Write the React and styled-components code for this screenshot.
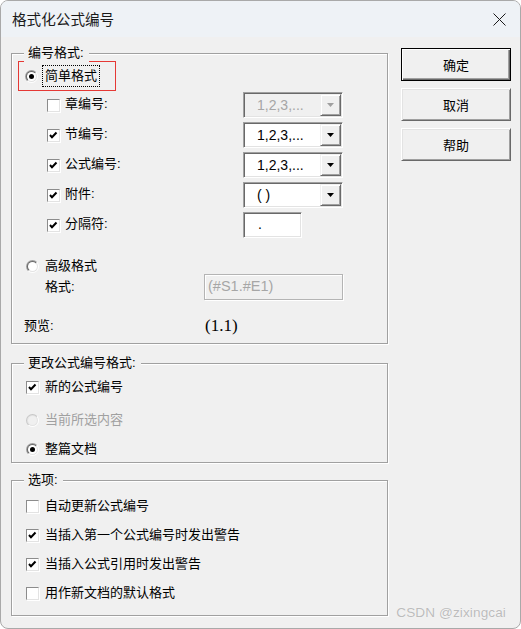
import React from "react";
import styled, { createGlobalStyle } from "styled-components";

const GlobalStyle = createGlobalStyle`
  html, body { margin: 0; padding: 0; background: #ffffff; }
  body { font-family: "Liberation Sans", "Noto Sans CJK SC", sans-serif; }
  * { box-sizing: border-box; }
`;

const FONT = `"Liberation Sans", "Noto Sans CJK SC", sans-serif`;

const Window = styled.div`
  position: relative;
  width: 521px;
  height: 629px;
  border: 1px solid #a9a9a9;
  border-radius: 8px;
  background: #f0f0f0;
  overflow: hidden;
  display: flex;
  flex-direction: column;
  font-family: ${FONT};
  font-size: 13px;
  color: #000;
`;

const TitleBar = styled.div`
  height: 36px;
  flex: none;
  display: flex;
  align-items: center;
  justify-content: space-between;
  padding: 0 9px 0 11px;
  background: #eef2f6;
`;

const Title = styled.div`
  font-size: 14.6px;
  line-height: 20px;
  color: #1a1a1a;
  margin-top: 1px;
`;

const CloseBox = styled.div`
  width: 24px;
  height: 24px;
  display: flex;
  align-items: center;
  justify-content: center;
`;

const Body = styled.div`
  flex: 1;
  display: flex;
  align-items: flex-start;
  gap: 13px;
  padding-left: 10px;
`;

const LeftColumn = styled.div`
  width: 377px;
  flex: none;
  display: flex;
  flex-direction: column;
  padding-top: 16px;
`;

const Group = styled.div`
  position: relative;
  height: ${(p) => p.$h}px;
  margin-top: ${(p) => p.$mt || 0}px;
  border: 1px solid #a0a0a0;
  box-shadow: 1px 1px 0 #ffffff, inset 1px 1px 0 #ffffff;
  display: flex;
  flex-direction: column;
`;

const Legend = styled.span`
  position: absolute;
  top: -10px;
  left: 12px;
  padding: 0 5px 0 4px;
  background: #f0f0f0;
  line-height: 18px;
  font-size: 13px;
`;

const Highlight = styled.div`
  width: 98px;
  height: 30px;
  margin: 7px 0 0 6px;
  border: 1px solid #e53935;
  display: flex;
  align-items: center;
  padding-left: 6px;
`;

const FocusLabel = styled.span`
  margin-left: 4px;
  border: 1px dotted #000;
  padding: 0 2px;
  line-height: 20px;
  white-space: nowrap;
`;

const OptionRow = styled.div`
  display: flex;
  align-items: center;
  gap: 6px;
  height: ${(p) => p.$h || 20}px;
  margin-top: ${(p) => p.$mt || 0}px;
  padding-left: ${(p) => p.$pl || 14}px;
  color: ${(p) => (p.$disabled ? "#a0a0a0" : "#000")};
  white-space: nowrap;
  line-height: 18px;
`;

const CheckGrid = styled.div`
  display: grid;
  grid-template-columns: 18px 178px auto;
  grid-auto-rows: 26px;
  row-gap: 4px;
  align-items: center;
  margin-top: 1px;
  padding-left: 35px;
`;

const GridLabel = styled.span`
  white-space: nowrap;
  line-height: 18px;
  margin-top: -2px;
`;

const CheckBox = styled.span`
  width: 13px;
  height: 13px;
  flex: none;
  display: inline-flex;
  border: 1px solid;
  border-color: #8c8c8c #e3e3e3 #e3e3e3 #8c8c8c;
  box-shadow: 1px 1px 0 #ffffff;
  background: #ffffff;
`;

const SelectBox = styled.div`
  width: 100px;
  height: 26px;
  display: flex;
  border-style: solid;
  border-width: 1px;
  border-color: #a0a0a0 #ffffff #ffffff #a0a0a0;
  box-shadow: inset 1px 1px 0 #696969, inset -1px -1px 0 #e3e3e3;
  padding: 1px;
  background: ${(p) => (p.$disabled ? "#f0f0f0" : "#ffffff")};
  background-clip: content-box;
`;

const SelectText = styled.span`
  flex: 1;
  padding-left: 12px;
  font-size: 14px;
  line-height: 22px;
  color: ${(p) => (p.$disabled ? "#a6a6a6" : "#000")};
  white-space: nowrap;
`;

const DropButton = styled.span`
  width: 21px;
  flex: none;
  display: flex;
  align-items: center;
  justify-content: center;
  background: #f0f0f0;
  border-style: solid;
  border-width: 1px;
  border-color: #f0f0f0 #696969 #696969 #f0f0f0;
  box-shadow: inset 1px 1px 0 #ffffff, inset -1px -1px 0 #a0a0a0;
`;

const TextBox = styled.div`
  width: ${(p) => p.$w}px;
  height: 26px;
  border-style: solid;
  border-width: 1px;
  border-color: #a0a0a0 #ffffff #ffffff #a0a0a0;
  box-shadow: inset 1px 1px 0 #696969, inset -1px -1px 0 #e3e3e3;
  background: #ffffff;
  padding-left: 14px;
  font-size: 14px;
  line-height: 22px;
`;

const FieldRow = styled.div`
  display: flex;
  align-items: center;
  height: ${(p) => p.$h}px;
  margin-top: ${(p) => p.$mt || 0}px;
  padding-left: ${(p) => p.$pl}px;
  white-space: nowrap;
`;

const FieldLabel = styled.span`
  width: ${(p) => p.$w}px;
  flex: none;
  line-height: 18px;
`;

const FlatBox = styled.div`
  width: ${(p) => p.$w}px;
  flex: none;
  height: 26px;
  border: 1px solid #b4b4b4;
  box-shadow: 1px 1px 0 #ffffff, inset 1px 1px 0 #ffffff;
  background: #f0f0f0;
  padding-left: 3px;
  font-size: 14.5px;
  line-height: 23px;
  color: #a6a6a6;
  white-space: nowrap;
`;

const PreviewValue = styled.span`
  font-family: "Liberation Serif", serif;
  font-size: 17px;
  line-height: 20px;
`;

const ButtonColumn = styled.div`
  display: flex;
  flex-direction: column;
  gap: 7px;
  padding-top: 11px;
`;

const DialogButton = styled.button`
  width: 110px;
  height: 33px;
  padding: 0;
  font-family: ${FONT};
  font-size: 13px;
  color: #000;
  background: #f0f0f0;
  border-style: solid;
  border-width: 1px;
  border-color: ${(p) => (p.$default ? "#000 #000 #000 #000" : "#ffffff #696969 #696969 #ffffff")};
  box-shadow: ${(p) =>
    p.$default
      ? "inset 1px 1px 0 #ffffff, inset -1px -1px 0 #696969, inset -2px -2px 0 #a0a0a0"
      : "inset 1px 1px 0 #e3e3e3, inset -1px -1px 0 #a0a0a0"};
`;

const Watermark = styled.div`
  position: absolute;
  right: 14px;
  bottom: 8px;
  font-family: "Liberation Sans", sans-serif;
  font-size: 13.6px;
  color: #bcbcbc;
  text-shadow: 0 0 1px #ffffff;
  letter-spacing: 0.1px;
`;

function Radio({ checked, disabled }) {
  const id = React.useId().replace(/:/g, "");
  return (
    <svg width="13" height="13" viewBox="0 0 13 13" style={{ flex: "none" }}>
      <defs>
        <linearGradient id={`o${id}`} x1="0" y1="0" x2="1" y2="1">
          <stop offset="0.5" stopColor={disabled ? "#c8c8c8" : "#a0a0a0"} />
          <stop offset="0.5" stopColor="#ffffff" />
        </linearGradient>
        <linearGradient id={`i${id}`} x1="0" y1="0" x2="1" y2="1">
          <stop offset="0.5" stopColor={disabled ? "#e3e3e3" : "#696969"} />
          <stop offset="0.5" stopColor="#e3e3e3" />
        </linearGradient>
      </defs>
      <circle cx="6.5" cy="6.5" r="6.5" fill={`url(#o${id})`} />
      <circle cx="6.5" cy="6.5" r="5.5" fill={`url(#i${id})`} />
      <circle cx="6.5" cy="6.5" r="4.5" fill={disabled ? "#f0f0f0" : "#ffffff"} />
      {checked && <circle cx="6.5" cy="6.5" r="2.5" fill="#000" />}
    </svg>
  );
}

function Check({ checked }) {
  return (
    <CheckBox>
      {checked && (
        <svg width="11" height="11" viewBox="0 0 11 11">
          <polyline points="2,5 4,7.3 8.5,2.5" fill="none" stroke="#000" strokeWidth="2" />
        </svg>
      )}
    </CheckBox>
  );
}

function Select({ value, disabled }) {
  return (
    <SelectBox $disabled={disabled}>
      <SelectText $disabled={disabled}>{value}</SelectText>
      <DropButton>
        <svg width="7" height="4" viewBox="0 0 7 4">
          <polygon points="0,0 7,0 3.5,4" fill={disabled ? "#a0a0a0" : "#000"} />
        </svg>
      </DropButton>
    </SelectBox>
  );
}

const numberRows = [
  { label: "章编号:", checked: false, value: "1,2,3,...", disabled: true },
  { label: "节编号:", checked: true, value: "1,2,3,..." },
  { label: "公式编号:", checked: true, value: "1,2,3,..." },
  { label: "附件:", checked: true, value: "( )" },
];

const optionRows = [
  { label: "自动更新公式编号", checked: false },
  { label: "当插入第一个公式编号时发出警告", checked: true },
  { label: "当插入公式引用时发出警告", checked: true },
  { label: "用作新文档的默认格式", checked: false },
];

export default function App() {
  return (
    <>
      <GlobalStyle />
      <Window>
        <TitleBar>
          <Title>格式化公式编号</Title>
          <CloseBox>
            <svg width="13" height="13" viewBox="0 0 13 13">
              <path d="M0.5 0.5 L12.5 12.5 M12.5 0.5 L0.5 12.5" stroke="#1a1a1a" strokeWidth="1" />
            </svg>
          </CloseBox>
        </TitleBar>
        <Body>
          <LeftColumn>
            <Group $h={291}>
              <Legend>编号格式:</Legend>
              <Highlight>
                <Radio checked />
                <FocusLabel>简单格式</FocusLabel>
              </Highlight>
              <CheckGrid>
                {numberRows.map((r) => (
                  <React.Fragment key={r.label}>
                    <Check checked={r.checked} />
                    <GridLabel>{r.label}</GridLabel>
                    <Select value={r.value} disabled={r.disabled} />
                  </React.Fragment>
                ))}
                <Check checked />
                <GridLabel>分隔符:</GridLabel>
                <TextBox $w={59}>.</TextBox>
              </CheckGrid>
              <OptionRow $mt={20} $h={16}>
                <Radio />
                <span>高级格式</span>
              </OptionRow>
              <FieldRow $h={26} $pl={33}>
                <FieldLabel $w={159}>格式:</FieldLabel>
                <FlatBox $w={139}>(#S1.#E1)</FlatBox>
              </FieldRow>
              <FieldRow $h={20} $pl={12} $mt={16}>
                <FieldLabel $w={181}>预览:</FieldLabel>
                <PreviewValue>(1.1)</PreviewValue>
              </FieldRow>
            </Group>

            <Group $h={100} $mt={19}>
              <Legend>更改公式编号格式:</Legend>
              <OptionRow $mt={13}>
                <Check checked />
                <span>新的公式编号</span>
              </OptionRow>
              <OptionRow $mt={13} $disabled>
                <Radio disabled />
                <span>当前所选内容</span>
              </OptionRow>
              <OptionRow $mt={9}>
                <Radio checked />
                <span>整篇文档</span>
              </OptionRow>
            </Group>

            <Group $h={136} $mt={17}>
              <Legend>选项:</Legend>
              {optionRows.map((r, i) => (
                <OptionRow key={r.label} $mt={i === 0 ? 15 : 9}>
                  <Check checked={r.checked} />
                  <span>{r.label}</span>
                </OptionRow>
              ))}
            </Group>
          </LeftColumn>

          <ButtonColumn>
            <DialogButton $default>确定</DialogButton>
            <DialogButton>取消</DialogButton>
            <DialogButton>帮助</DialogButton>
          </ButtonColumn>
        </Body>
        <Watermark>CSDN @zixingcai</Watermark>
      </Window>
    </>
  );
}
